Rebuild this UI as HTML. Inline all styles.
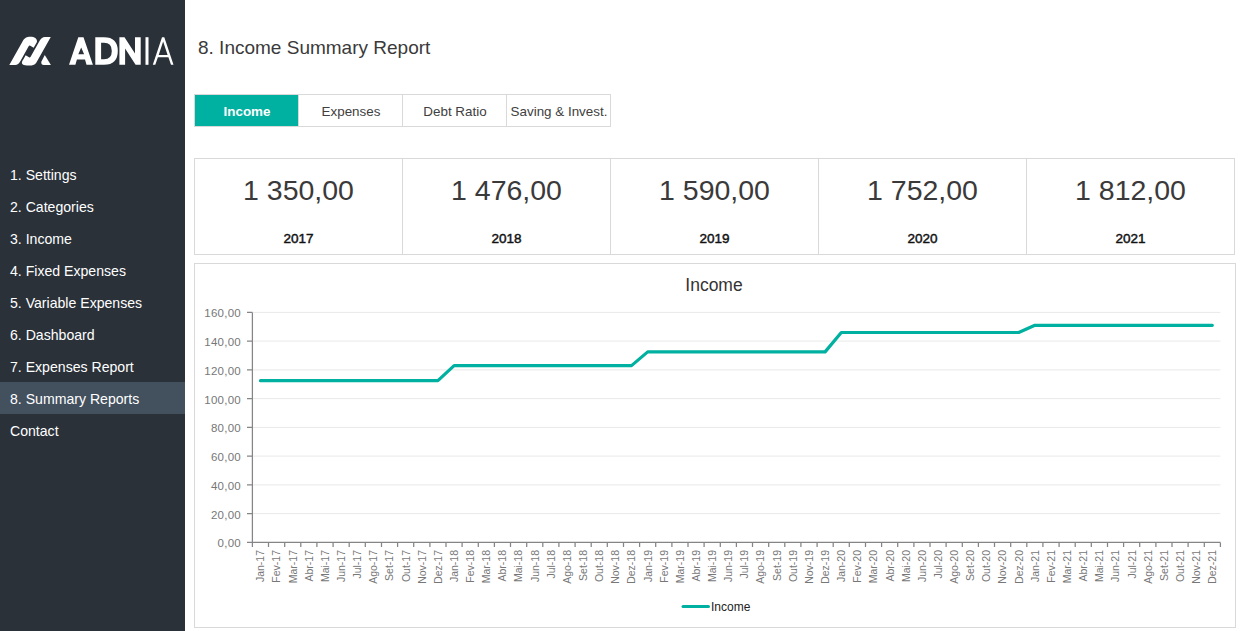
<!DOCTYPE html>
<html><head><meta charset="utf-8">
<style>
*{margin:0;padding:0;box-sizing:border-box}
html,body{width:1242px;height:631px;overflow:hidden;background:#fff;font-family:"Liberation Sans",sans-serif}
#side{position:absolute;left:0;top:0;width:185px;height:631px;background:#2a3139}
.mi{position:absolute;left:0;width:185px;height:32px;line-height:34px;padding-left:10px;color:#fff;font-size:14.1px}
.mi.act{background:#43515e}
#title{position:absolute;left:198px;top:37px;font-size:19px;color:#3a3a3a;white-space:nowrap}
#tabs{position:absolute;left:194px;top:94px;width:417px;height:33px;border:1px solid #d9d9d9;background:#fff}
.tab{position:absolute;top:0;height:31px;line-height:33px;text-align:center;font-size:13.4px;color:#404040}
.tab.on{background:#00b0a0;color:#fff;font-weight:bold}
.tsep{position:absolute;top:0;width:1px;height:31px;background:#d9d9d9}
#kpi{position:absolute;left:194px;top:158px;width:1041px;height:97px;border:1px solid #d9d9d9}
.kc{position:absolute;top:0;width:208px;height:95px;border-right:1px solid #d9d9d9}
.kv{position:absolute;left:0;width:100%;top:15px;text-align:center;font-size:28.5px;color:#3a3a3a}
.ky{position:absolute;left:0;width:100%;top:72px;text-align:center;font-size:13.5px;color:#111;-webkit-text-stroke:0.45px #111}
#chart{position:absolute;left:194px;top:263px;width:1042px;height:365px;border:1px solid #d9d9d9}
svg text{font-family:"Liberation Sans",sans-serif}
</style></head><body>
<div id="side">
<svg width="185" height="100" style="position:absolute;left:0;top:0">
<g fill="#fff">
<path d="M9.3,65 L22.25,42 C24.5,37.6 26.8,36.7 30.3,36.7 C34.5,36.7 37.5,38.6 36.95,42 L33.64,47.68 L30.29,45.79 Q29.24,45.2 28.65,46.25 L20.45,61 Q18.4,65 15.2,65 Z"/>
<path d="M50.76,37 L37.53,60.5 Q35.2,65.4 31.5,65.4 L27,65.4 C22,65.4 20.5,63 23.3,59.5 L25.65,55.32 L29,57.21 Q30.05,57.8 30.64,56.75 L39.8,40.5 Q41.76,37 44.8,37 Z"/>
<path d="M44.8,54.9 L50.9,65 L43.8,65 Q41,65 41.3,61.8 Z"/>
<path d="M69,64.8 L78.3,37.2 L83.5,37.2 L92.9,64.8 L86.5,64.8 L85,59.5 L76.9,59.5 L75.4,64.8 Z M78.3,54.3 L84.1,54.3 L81.2,47.5 Z"/>
<path d="M95.3,37.2 L104,37.2 Q117.8,37.2 117.8,51 Q117.8,64.8 104,64.8 L95.3,64.8 Z M101.1,42.8 L101.1,59.2 L104,59.2 Q111.8,59.2 111.8,51 Q111.8,42.8 104,42.8 Z"/>
<path d="M119.4,64.8 L119.4,37.2 L124.5,37.2 L135,53.5 L135,37.2 L140.7,37.2 L140.7,64.8 L135.6,64.8 L125.1,48.5 L125.1,64.8 Z"/>
<rect x="145.5" y="37.2" width="3" height="27.6"/>
<path d="M152.8,64.8 L162,37.2 L164.3,37.2 L173.5,64.8 L171,64.8 L168.4,57.3 L157.9,57.3 L155.3,64.8 Z M158.7,55 L167.6,55 L163.15,41.5 Z"/>
</g></svg>
<div class="mi" style="top:158px">1. Settings</div><div class="mi" style="top:190px">2. Categories</div><div class="mi" style="top:222px">3. Income</div><div class="mi" style="top:254px">4. Fixed Expenses</div><div class="mi" style="top:286px">5. Variable Expenses</div><div class="mi" style="top:318px">6. Dashboard</div><div class="mi" style="top:350px">7. Expenses Report</div><div class="mi act" style="top:382px">8. Summary Reports</div><div class="mi" style="top:414px">Contact</div>
</div>
<div id="title">8. Income Summary Report</div>
<div id="tabs">
<div class="tab on" style="left:0;width:104px">Income</div>
<div class="tsep" style="left:103px"></div>
<div class="tab" style="left:104px;width:104px">Expenses</div>
<div class="tsep" style="left:207px"></div>
<div class="tab" style="left:208px;width:104px">Debt Ratio</div>
<div class="tsep" style="left:311px"></div>
<div class="tab" style="left:312px;width:104px">Saving &amp; Invest.</div>
</div>
<div id="kpi"><div class="kc" style="left:0px"><div class="kv">1 350,00</div><div class="ky">2017</div></div><div class="kc" style="left:208px"><div class="kv">1 476,00</div><div class="ky">2018</div></div><div class="kc" style="left:416px"><div class="kv">1 590,00</div><div class="ky">2019</div></div><div class="kc" style="left:624px"><div class="kv">1 752,00</div><div class="ky">2020</div></div><div class="kc" style="left:832px"><div class="kv">1 812,00</div><div class="ky">2021</div></div></div>
<div id="chart"></div>
<svg width="1242" height="631" style="position:absolute;left:0;top:0">
<text x="714" y="291" text-anchor="middle" font-size="17.5" fill="#333">Income</text>
<g stroke="#e9e9e9" stroke-width="1"><line x1="252.4" x2="1220.4" y1="513.6" y2="513.6"/><line x1="252.4" x2="1220.4" y1="484.9" y2="484.9"/><line x1="252.4" x2="1220.4" y1="456.1" y2="456.1"/><line x1="252.4" x2="1220.4" y1="427.4" y2="427.4"/><line x1="252.4" x2="1220.4" y1="398.6" y2="398.6"/><line x1="252.4" x2="1220.4" y1="369.9" y2="369.9"/><line x1="252.4" x2="1220.4" y1="341.1" y2="341.1"/><line x1="252.4" x2="1220.4" y1="312.4" y2="312.4"/></g>
<path d="M252.4,312.4V542.4H1220.4M247,542.4H252.4M247,513.6H252.4M247,484.9H252.4M247,456.1H252.4M247,427.4H252.4M247,398.6H252.4M247,369.9H252.4M247,341.1H252.4M247,312.4H252.4M252.4,542.4V547M268.5,542.4V547M284.7,542.4V547M300.8,542.4V547M316.9,542.4V547M333.1,542.4V547M349.2,542.4V547M365.3,542.4V547M381.5,542.4V547M397.6,542.4V547M413.7,542.4V547M429.9,542.4V547M446.0,542.4V547M462.1,542.4V547M478.3,542.4V547M494.4,542.4V547M510.5,542.4V547M526.7,542.4V547M542.8,542.4V547M558.9,542.4V547M575.1,542.4V547M591.2,542.4V547M607.3,542.4V547M623.5,542.4V547M639.6,542.4V547M655.7,542.4V547M671.9,542.4V547M688.0,542.4V547M704.1,542.4V547M720.3,542.4V547M736.4,542.4V547M752.5,542.4V547M768.7,542.4V547M784.8,542.4V547M800.9,542.4V547M817.1,542.4V547M833.2,542.4V547M849.3,542.4V547M865.5,542.4V547M881.6,542.4V547M897.7,542.4V547M913.9,542.4V547M930.0,542.4V547M946.1,542.4V547M962.3,542.4V547M978.4,542.4V547M994.5,542.4V547M1010.7,542.4V547M1026.8,542.4V547M1042.9,542.4V547M1059.1,542.4V547M1075.2,542.4V547M1091.3,542.4V547M1107.5,542.4V547M1123.6,542.4V547M1139.7,542.4V547M1155.9,542.4V547M1172.0,542.4V547M1188.1,542.4V547M1204.3,542.4V547M1220.4,542.4V547" stroke="#858585" stroke-width="1.25" fill="none"/>
<g font-size="11.5" fill="#777" letter-spacing="0.25" text-anchor="end"><text x="241" y="547.4">0,00</text><text x="241" y="518.6">20,00</text><text x="241" y="489.9">40,00</text><text x="241" y="461.1">60,00</text><text x="241" y="432.4">80,00</text><text x="241" y="403.6">100,00</text><text x="241" y="374.9">120,00</text><text x="241" y="346.1">140,00</text><text x="241" y="317.4">160,00</text></g>
<g font-size="10.5" fill="#777" text-anchor="end"><text transform="translate(264.3,550) rotate(-90)">Jan-17</text><text transform="translate(280.4,550) rotate(-90)">Fev-17</text><text transform="translate(296.5,550) rotate(-90)">Mar-17</text><text transform="translate(312.7,550) rotate(-90)">Abr-17</text><text transform="translate(328.8,550) rotate(-90)">Mai-17</text><text transform="translate(344.9,550) rotate(-90)">Jun-17</text><text transform="translate(361.1,550) rotate(-90)">Jul-17</text><text transform="translate(377.2,550) rotate(-90)">Ago-17</text><text transform="translate(393.3,550) rotate(-90)">Set-17</text><text transform="translate(409.5,550) rotate(-90)">Out-17</text><text transform="translate(425.6,550) rotate(-90)">Nov-17</text><text transform="translate(441.7,550) rotate(-90)">Dez-17</text><text transform="translate(457.9,550) rotate(-90)">Jan-18</text><text transform="translate(474.0,550) rotate(-90)">Fev-18</text><text transform="translate(490.1,550) rotate(-90)">Mar-18</text><text transform="translate(506.3,550) rotate(-90)">Abr-18</text><text transform="translate(522.4,550) rotate(-90)">Mai-18</text><text transform="translate(538.5,550) rotate(-90)">Jun-18</text><text transform="translate(554.7,550) rotate(-90)">Jul-18</text><text transform="translate(570.8,550) rotate(-90)">Ago-18</text><text transform="translate(586.9,550) rotate(-90)">Set-18</text><text transform="translate(603.1,550) rotate(-90)">Out-18</text><text transform="translate(619.2,550) rotate(-90)">Nov-18</text><text transform="translate(635.3,550) rotate(-90)">Dez-18</text><text transform="translate(651.5,550) rotate(-90)">Jan-19</text><text transform="translate(667.6,550) rotate(-90)">Fev-19</text><text transform="translate(683.7,550) rotate(-90)">Mar-19</text><text transform="translate(699.9,550) rotate(-90)">Abr-19</text><text transform="translate(716.0,550) rotate(-90)">Mai-19</text><text transform="translate(732.1,550) rotate(-90)">Jun-19</text><text transform="translate(748.3,550) rotate(-90)">Jul-19</text><text transform="translate(764.4,550) rotate(-90)">Ago-19</text><text transform="translate(780.5,550) rotate(-90)">Set-19</text><text transform="translate(796.7,550) rotate(-90)">Out-19</text><text transform="translate(812.8,550) rotate(-90)">Nov-19</text><text transform="translate(828.9,550) rotate(-90)">Dez-19</text><text transform="translate(845.1,550) rotate(-90)">Jan-20</text><text transform="translate(861.2,550) rotate(-90)">Fev-20</text><text transform="translate(877.3,550) rotate(-90)">Mar-20</text><text transform="translate(893.5,550) rotate(-90)">Abr-20</text><text transform="translate(909.6,550) rotate(-90)">Mai-20</text><text transform="translate(925.7,550) rotate(-90)">Jun-20</text><text transform="translate(941.9,550) rotate(-90)">Jul-20</text><text transform="translate(958.0,550) rotate(-90)">Ago-20</text><text transform="translate(974.1,550) rotate(-90)">Set-20</text><text transform="translate(990.3,550) rotate(-90)">Out-20</text><text transform="translate(1006.4,550) rotate(-90)">Nov-20</text><text transform="translate(1022.5,550) rotate(-90)">Dez-20</text><text transform="translate(1038.7,550) rotate(-90)">Jan-21</text><text transform="translate(1054.8,550) rotate(-90)">Fev-21</text><text transform="translate(1070.9,550) rotate(-90)">Mar-21</text><text transform="translate(1087.1,550) rotate(-90)">Abr-21</text><text transform="translate(1103.2,550) rotate(-90)">Mai-21</text><text transform="translate(1119.3,550) rotate(-90)">Jun-21</text><text transform="translate(1135.5,550) rotate(-90)">Jul-21</text><text transform="translate(1151.6,550) rotate(-90)">Ago-21</text><text transform="translate(1167.7,550) rotate(-90)">Set-21</text><text transform="translate(1183.9,550) rotate(-90)">Out-21</text><text transform="translate(1200.0,550) rotate(-90)">Nov-21</text><text transform="translate(1216.1,550) rotate(-90)">Dez-21</text></g>
<polyline points="260.5,380.7 276.6,380.7 292.7,380.7 308.9,380.7 325.0,380.7 341.1,380.7 357.3,380.7 373.4,380.7 389.5,380.7 405.7,380.7 421.8,380.7 437.9,380.7 454.1,365.6 470.2,365.6 486.3,365.6 502.5,365.6 518.6,365.6 534.7,365.6 550.9,365.6 567.0,365.6 583.1,365.6 599.3,365.6 615.4,365.6 631.5,365.6 647.7,351.9 663.8,351.9 679.9,351.9 696.1,351.9 712.2,351.9 728.3,351.9 744.5,351.9 760.6,351.9 776.7,351.9 792.9,351.9 809.0,351.9 825.1,351.9 841.3,332.5 857.4,332.5 873.5,332.5 889.7,332.5 905.8,332.5 921.9,332.5 938.1,332.5 954.2,332.5 970.3,332.5 986.5,332.5 1002.6,332.5 1018.7,332.5 1034.9,325.3 1051.0,325.3 1067.1,325.3 1083.3,325.3 1099.4,325.3 1115.5,325.3 1131.7,325.3 1147.8,325.3 1163.9,325.3 1180.1,325.3 1196.2,325.3 1212.3,325.3" fill="none" stroke="#00b0a0" stroke-width="3.2" stroke-linejoin="round" stroke-linecap="round"/>
<line x1="683" x2="708.5" y1="606.6" y2="606.6" stroke="#00b0a0" stroke-width="3" stroke-linecap="round"/>
<text x="711" y="610.5" font-size="12" fill="#222">Income</text>
</svg>
</body></html>
